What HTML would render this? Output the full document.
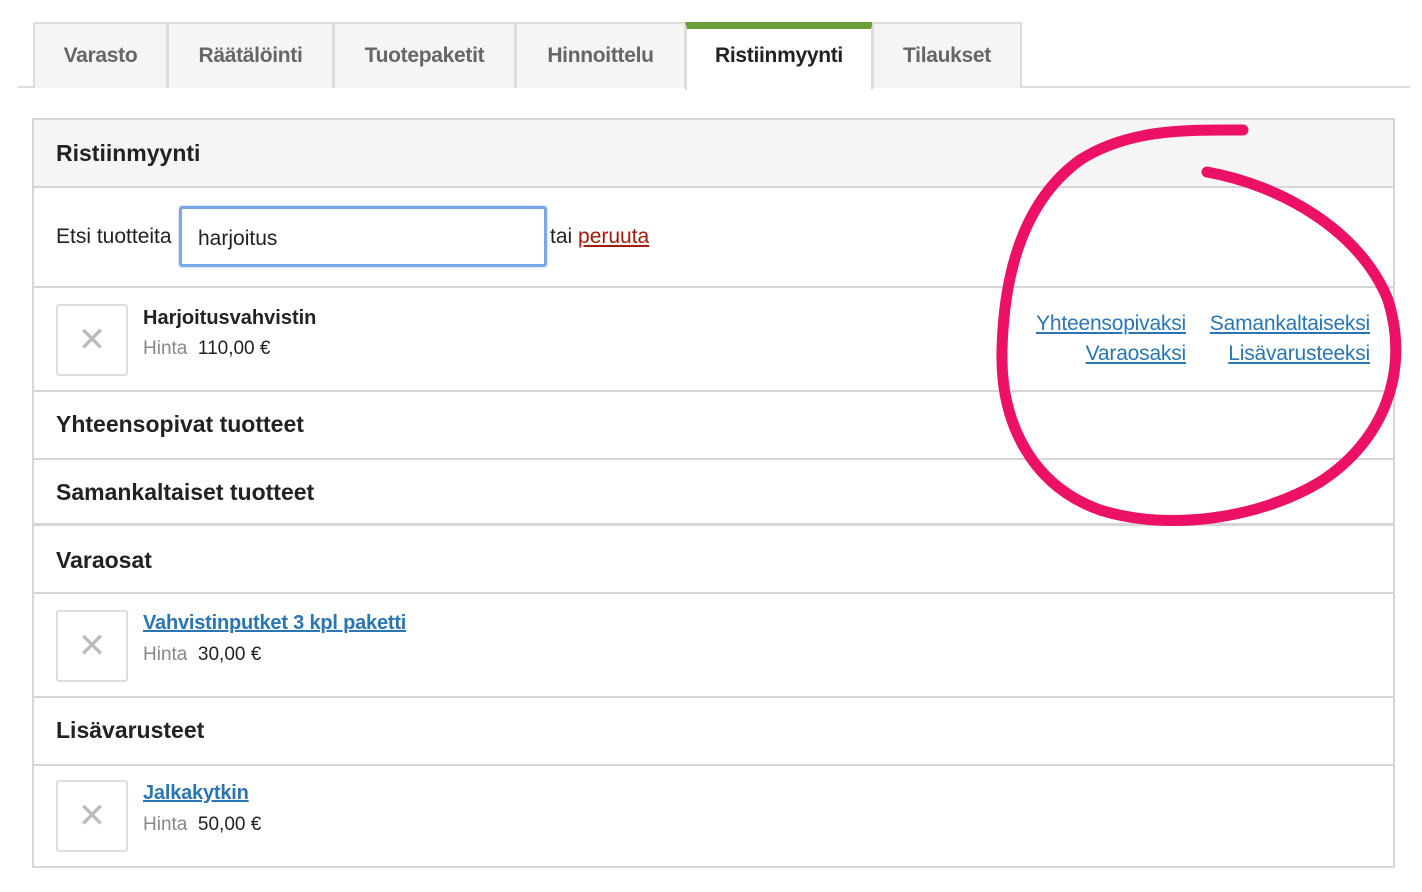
<!DOCTYPE html>
<html><head><meta charset="utf-8"><style>
*{margin:0;padding:0;box-sizing:border-box}
body{width:1422px;height:892px;background:#fff;font-family:"Liberation Sans",sans-serif;position:relative;overflow:hidden;color:#222}
.a{position:absolute;white-space:nowrap}
.tab{position:absolute;top:22px;height:66px;background:#f5f5f5;border:2px solid #ddd;border-bottom:none;color:#666;font-size:21px;font-weight:bold;display:flex;align-items:center;justify-content:center;letter-spacing:-0.3px}
.hl{position:absolute;left:33px;width:1361px;height:2px;background:#d6d6d6}
.img{position:absolute;left:56px;width:72px;height:72px;border:2px solid #ddd;border-radius:3px;color:#bbb;font-size:34px;display:flex;align-items:center;justify-content:center}
.h{position:absolute;left:56px;font-size:23px;font-weight:bold;color:#222;letter-spacing:0}
.lnk{color:#2a75b3;text-decoration:underline;font-size:21px;letter-spacing:-0.2px}
.gray{color:#888}
</style></head><body>
<div class="a" style="left:18px;top:86px;width:1392px;height:2px;background:#ddd"></div>
<div class="tab" style="left:33px;width:135px">Varasto</div>
<div class="tab" style="left:167px;width:167px">Räätälöinti</div>
<div class="tab" style="left:333px;width:183px">Tuotepaketit</div>
<div class="tab" style="left:515px;width:171px">Hinnoittelu</div>
<div class="tab" style="left:685px;width:188px;background:#fff;color:#222;border-top:7px solid #6a9f3a;height:68px;padding-bottom:8px">Ristiinmyynti</div>
<div class="tab" style="left:872px;width:150px">Tilaukset</div>

<div class="a" style="left:32px;top:118px;width:1363px;height:750px;border:2px solid #d6d6d6"></div>
<div class="a" style="left:34px;top:120px;width:1359px;height:67px;background:#f5f5f5"></div>
<div class="h" style="top:140px">Ristiinmyynti</div>
<div class="hl" style="top:186px"></div>
<div class="a" style="left:56px;top:225px;font-size:21px">Etsi tuotteita</div>
<div class="a" style="left:179px;top:206px;width:368px;height:61px;border:3px solid #7aa7ea;border-radius:3px;box-shadow:0 0 2px #9bbcf0"></div>
<div class="a" style="left:198px;top:227px;font-size:21px">harjoitus</div>
<div class="a" style="left:550px;top:225px;font-size:21px">tai <span style="color:#a51b0b;text-decoration:underline">peruuta</span></div>
<div class="hl" style="top:286px"></div>
<div class="img" style="top:304px">✕</div>
<div class="a" style="left:143px;top:307px;font-size:20px;font-weight:bold">Harjoitusvahvistin</div>
<div class="a" style="left:143px;top:338px;font-size:19px"><span class="gray">Hinta</span>&nbsp; 110,00 €</div>
<div class="a lnk" style="right:236px;top:312px">Yhteensopivaksi</div>
<div class="a lnk" style="right:52px;top:312px">Samankaltaiseksi</div>
<div class="a lnk" style="right:236px;top:342px">Varaosaksi</div>
<div class="a lnk" style="right:52px;top:342px">Lisävarusteeksi</div>
<div class="hl" style="top:390px"></div>
<div class="h" style="top:411px">Yhteensopivat tuotteet</div>
<div class="hl" style="top:458px"></div>
<div class="h" style="top:479px">Samankaltaiset tuotteet</div>
<div class="hl" style="top:523px;height:3px"></div>
<div class="h" style="top:547px">Varaosat</div>
<div class="hl" style="top:592px"></div>
<div class="img" style="top:610px">✕</div>
<div class="a lnk" style="left:143px;top:612px;font-weight:bold;font-size:20px">Vahvistinputket 3 kpl paketti</div>
<div class="a" style="left:143px;top:644px;font-size:19px"><span class="gray">Hinta</span>&nbsp; 30,00 €</div>
<div class="hl" style="top:696px"></div>
<div class="h" style="top:717px">Lisävarusteet</div>
<div class="hl" style="top:764px"></div>
<div class="img" style="top:780px">✕</div>
<div class="a lnk" style="left:143px;top:782px;font-weight:bold;font-size:20px">Jalkakytkin</div>
<div class="a" style="left:143px;top:814px;font-size:19px"><span class="gray">Hinta</span>&nbsp; 50,00 €</div>

<svg class="a" style="left:0;top:0" width="1422" height="892">
<path d="M1207,172 C1280,185 1360,230 1388,300 C1410,370 1385,440 1320,482 C1260,518 1170,532 1100,510 C1030,485 1000,420 1002,350 C1004,270 1025,200 1080,160 C1130,128 1190,130 1243,130" fill="none" stroke="#ec1164" stroke-width="11" stroke-linecap="round"/>
</svg>
</body></html>
